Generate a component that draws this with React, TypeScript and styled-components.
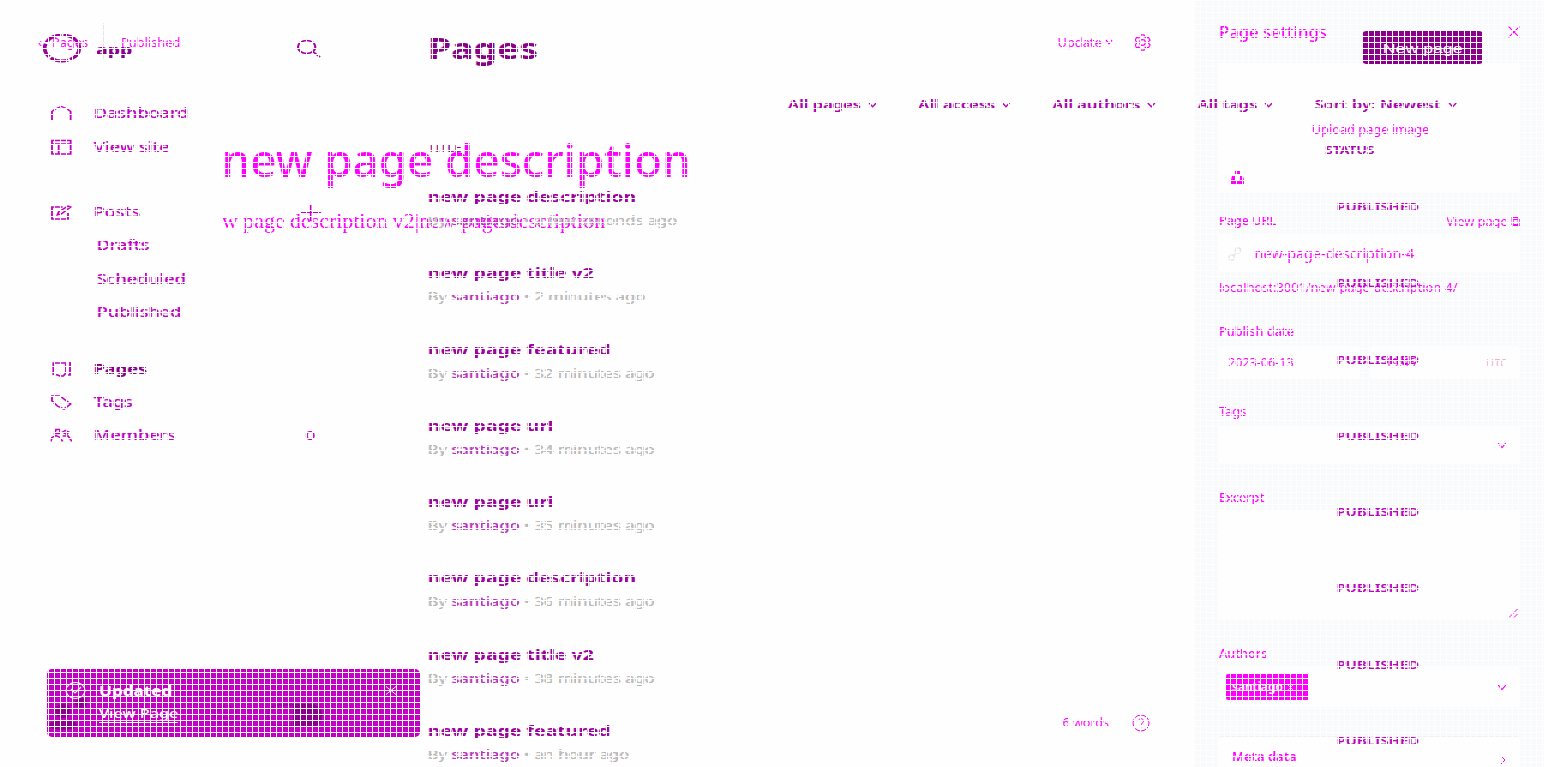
import React from "react";
import styled, { createGlobalStyle } from "styled-components";

const Global = createGlobalStyle`
  * { box-sizing: border-box; }
  body { margin: 0; background: #fefefe; overflow: hidden; font-family: "Noto Sans", "Open Sans", sans-serif; }
`;
const Stage = styled.div`
  position: relative; width: 1544px; height: 767px; overflow: hidden; background: #fefefe;
`;
const Layer = styled.div<{ $wide?: boolean }>`
  position: absolute; top: 0; left: 0; height: 767px; display: flex;
  width: ${p => (p.$wide ? 1158 : 1544)}px;
  transform: ${p => (p.$wide ? "scaleX(1.33333)" : "none")};
  text-shadow: ${p => (p.$wide ? "-0.7px 0 0 #d2d2d2" : "none")};
  transform-origin: 0 0;
`;
const Mesh = styled.div`
  position: absolute; inset: 0; pointer-events: none;
  background:
    repeating-linear-gradient(90deg, #fefefe 0 1px, transparent 1px 6px),
    repeating-linear-gradient(180deg, #fefefe 0 1px, transparent 1px 6px);
`;
const Txt = styled.span<{ $s: number; $c?: string; $w?: number; $ls?: number }>`
  font-size: ${p => p.$s}px; color: ${p => p.$c || "#f0f"}; font-weight: ${p => p.$w || 400};
  letter-spacing: ${p => p.$ls || 0}px; line-height: 20px; white-space: pre;
`;

/* editor */
const Editor = styled.main`
  width: 1195px; height: 767px; display: flex; flex-direction: column;
`;
const EditorBar = styled.header`
  height: 84px; padding: 0 44px 0 38px; display: flex; align-items: center;
`;
const Divider = styled.i`
  width: 1px; height: 36px; margin-top: -2px; background: #e6e6e6; margin-left: 15px; margin-right: 17px;
`;
const Spacer = styled.div<{ $w?: number }>`flex: ${p => (p.$w ? `0 0 ${p.$w}px` : "1")};`;
const EditorTitle = styled.h1`
  margin: 40px 0 0 221.500px; font-size: 45.700px; line-height: 70px; font-weight: 500; color: #f0f; white-space: pre;
`;
const Body = styled.p`
  margin: 12px 0 0 222px; font: 500 21.900px/30px "Liberation Serif", serif; color: #f0f; white-space: pre;
`;
const EditorFoot = styled.footer`
  margin-top: auto; height: 88px; padding-right: 45px; display: flex; justify-content: flex-end; align-items: center; gap: 23px;
`;
const Settings = styled.aside`
  width: 349px; height: 767px; background: #f9fafc; padding: 22px 24px 0 24px; display: flex; flex-direction: column;
`;
const Head = styled.div<{ $mt?: number }>`
  display: flex; justify-content: space-between; align-items: center; height: 20px; margin-top: ${p => p.$mt || 0}px; flex: none;
`;
const Box = styled.div<{ $h: number; $mt?: number; $w?: number; $p?: number }>`
  height: ${p => p.$h}px; margin-top: ${p => p.$mt || 0}px; width: ${p => (p.$w ? p.$w + "px" : "auto")};
  background: #fefefe; border-radius: 3px; display: flex; align-items: center; flex: none; padding: ${p => (p.$p ? `${p.$p}px` : "0 13px 0 9px")};
`;
const Upload = styled(Box)`
  flex-direction: column; padding: 56px 10px 8px 12px;
  svg { align-self: flex-start; margin-top: auto; }
`;
const DateRow = styled.div`display: flex; justify-content: space-between; margin-top: 5px;`;
const Chip = styled.span`
  background: #f0f; border-radius: 2px; height: 26px; width: 83px; padding-left: 6px; margin-left: -2px;
  display: flex; align-items: center; gap: 4px;
`;
const Card = styled(Box)`border-top: 1px solid #eef2f4; height: 60px; align-items: flex-start; padding-top: 9px;`;

/* list */
const Side = styled.nav`width: 321px; padding-left: 32px; padding-top: 0.6px; height: 767px;`;
const Brand = styled.div`height: 96px; padding-right: 80px; display: flex; align-items: center; gap: 10px;`;
const Group = styled.div<{ $mb: number }>`margin-bottom: ${p => p.$mb}px;`;
const NavRow = styled.div<{ $sub?: boolean; $end?: number }>`
  height: 33.4px; display: flex; align-items: center; padding-left: ${p => (p.$sub ? 40.5 : 6)}px; gap: 16.4px;
  padding-right: ${p => p.$end || 80}px;
`;
const Main = styled.section`flex: 1; padding-right: 46px; height: 767px; display: flex; flex-direction: column;`;
const Top = styled.div`height: 95px; flex: none; display: flex; align-items: center; justify-content: space-between;`;
const NewBtn = styled.button`
  width: 90px; height: 33px; border: 0; border-radius: 3px; background: #8b008b; padding: 2px 0 0;
`;
const Filters = styled.div`height: 20px; flex: none; display: flex; justify-content: flex-end; gap: 31px; padding-right: 19.500px;`;
const Filter = styled.div`display: flex; align-items: center; gap: 5px;`;
const Cols = styled.div`margin-top: 23px; height: 20px; flex: none; display: flex; align-items: center;`;
const StatusHead = styled.div`width: 118px;`;
const StatusCell = styled.div`width: 118.500px; padding-left: 9px; padding-top: 8px;`;
const Item = styled.article`
  height: 76.300px; display: flex; padding-top: 28px; flex: none;
`;
const ItemText = styled.div`flex: 1; display: flex; flex-direction: column; gap: 3px;`;
const Meta = styled.div`line-height: 20px;`;

const Toast = styled.div`
  position: absolute; left: 47px; top: 669px; width: 373px; height: 68px; border-radius: 5px; background: #c400c4; overflow: hidden;
`;
const Ghost = styled.svg`position: absolute; inset: 0;`;
const ToastBody = styled.div`position: relative; display: flex; padding: 12px 23px 0 18px; gap: 13px;`;
const ToastText = styled.div`flex: 1; display: flex; flex-direction: column; gap: 2px;`;
const Stretch = styled.div<{ $line?: boolean }>`
  transform: scaleX(1.25); transform-origin: 0 0; display: flex; align-self: flex-start; height: 20px;
  border-bottom: ${p => (p.$line ? "1px solid #fff" : "0")};
`;

const Chev = ({ c = "#b800b8", w = 8, h = 6, t = 1.3 }: { c?: string; w?: number; h?: number; t?: number }) => (
  <svg width={w} height={h} viewBox="0 0 8 6" preserveAspectRatio="none" fill="none" stroke={c} strokeWidth={t}><path d="M1 1l3 3.800L7 1" /></svg>
);
const Cross = ({ c, s }: { c: string; s: number }) => (
  <svg width={s} height={s} viewBox="0 0 10 10" stroke={c} strokeWidth="1"><path d="M.5.5l9 9M9.5.5l-9 9" /></svg>
);
const Gear = ({ s, c }: { s: number; c: string }) => (
  <svg width={s} height={s} viewBox="0 0 16 16" fill="none" stroke={c} strokeWidth="1.1">
    <path d="M6.500.8h3l.5 2 1.600.9 2-.5 1.500 2.600-1.400 1.400v1.700l1.400 1.400-1.500 2.600-2-.5-1.600.9-.5 1.900h-3l-.5-2-1.600-.8-2 .5L1 10.300l1.400-1.400V7.200L1 5.800l1.400-2.600 2 .5L6 2.800z" />
    <circle cx="8" cy="8" r="2.700" />
  </svg>
);

const icons: Record<string, React.ReactNode> = {
  Dashboard: <path d="M1 15.500V6.500L3.500 4 8 1.500 12.500 4 15 6.500v9" />,
  "View site": <path d="M1 1.500h14v13.500H1zM1 5h14M6 5v10" />,
  Posts: <path d="M9 3H1v12h12V9M5 11l1-3 7-6 2 1-7 7z" />,
  Pages: <path d="M2 14V2h9.500v10l-2 3H7l-3-1.500M14.500 1v13H13" />,
  Tags: <path d="M1 2h6l8 8-5 5-5-3-4-5z" />,
  Members: <path d="M0 14.500l1-4 3-2 3 2 2 4M4 2.500h3v4H3zM9 5l2-1.500L13.500 5 12 7.500zM9 9h4l3 5.500" />,
};
const Nav = ({ n, sub, bold, extra, end }: { n: string; sub?: boolean; bold?: boolean; extra?: React.ReactNode; end?: number }) => (
  <NavRow $sub={sub} $end={end}>
    {!sub && <svg width="16" height="16" viewBox="0 0 16 16" fill="none" stroke="#c400c4" strokeWidth="1.4">{icons[n]}</svg>}
    <Txt $s={13.7} $c={bold ? "#8b008b" : "#c400c4"} $w={bold ? 700 : 500} $ls={-0.1}>{n}</Txt>
    {extra && <><Spacer />{extra}</>}
  </NavRow>
);
const items = [
  ["new page description", "a few seconds ago"], ["new page title v2", "2 minutes ago"],
  ["new page featured", "32 minutes ago"], ["new page url", "34 minutes ago"],
  ["new page url", "35 minutes ago"], ["new page description", "36 minutes ago"],
  ["new page title v2", "38 minutes ago"], ["new page featured", "an hour ago"],
];

export default function App() {
  return (
    <Stage>
      <Global />
      <Layer>
        <Editor>
          <EditorBar>
            <Txt $s={12.8}>‹   Pages</Txt><Divider />
            <Txt $s={12.8}>Published</Txt><Spacer />
            <Txt $s={12.8}>Update </Txt><Chev c="#f0f" /><Spacer $w={21} /><Gear s={17} c="#f0f" />
          </EditorBar>
          <EditorTitle>new page description</EditorTitle>
          <Body>w page description v2|new page description</Body>
          <EditorFoot>
            <Txt $s={12.5}>6 words</Txt>
            <svg width="18" height="18" viewBox="0 0 18 18" fill="none" stroke="#f0f"><circle cx="9" cy="9" r="8" /><path d="M6.500 7c0-3 5-3 5 0 0 2-2.500 2-2.500 4M9 12.500v1" /></svg>
          </EditorFoot>
        </Editor>
        <Settings>
          <Head><Txt $s={16.7} $w={500}>Page settings</Txt><Spacer /><Cross c="#f0f" s={12} /></Head>
          <Upload $h={130} $mt={21}>
            <Txt $s={12.8}>Upload page image</Txt>
            <svg width="13" height="14" viewBox="0 0 13 14" fill="#f0f"><path d="M4 0h5v3H4zM1 5h3v4h5V5h3l1 4v4H0V9z" /></svg>
          </Upload>
          <Head $mt={18}><Txt $s={12.6} $w={500}>Page URL</Txt><Txt $s={12.8}>View page ⧉</Txt></Head>
          <Box $h={37} $mt={4}>
            <svg width="14" height="14" viewBox="0 0 14 14" fill="none" stroke="#e1e6ea" strokeWidth="1.500"><rect x="7.500" y="1" width="5" height="5" rx="2" /><rect x="1" y="8" width="5" height="5" rx="2" /><path d="M5 9l4-4" /></svg>
            <Spacer $w={12.5} /><Txt $s={14.4}>new-page-description-4</Txt>
          </Box>
          <Head $mt={5}><Txt $s={12.8}>localhost:3001/new-page-description-4/</Txt></Head>
          <Head $mt={24}><Txt $s={12.7} $w={500}>Publish date</Txt></Head>
          <DateRow>
            <Box $h={33} $w={141}><Txt $s={12.600}>2023-06-13</Txt></Box>
            <Box $h={33} $w={150}><Txt $s={12}>  19:45</Txt><Spacer /><Txt $s={11} $c="#f0b0c8">UTC</Txt></Box>
          </DateRow>
          <Head $mt={22}><Txt $s={12.8}>Tags</Txt></Head>
          <Box $h={38} $mt={5}><Spacer /><Chev c="#f0f" w={10} h={7} t={0.9} /></Box>
          <Head $mt={23}><Txt $s={12.7} $w={500}>Excerpt</Txt></Head>
          <Box $h={109} $mt={4} $p={2}><Spacer /><svg width="9" height="9" viewBox="0 0 9 9" stroke="#f0f" style={{ alignSelf: "flex-end" }}><path d="M0 8.500L8.500 0M5 8.500l3.500-3.500" /></svg></Box>
          <Head $mt={23}><Txt $s={12.7} $w={500}>Authors</Txt></Head>
          <Box $h={40} $mt={4}><Chip><Txt $s={12} $c="#fff" $w={600}>santiago</Txt><Cross c="#fff" s={7} /></Chip><Spacer /><Chev c="#f0f" w={10} h={7} t={0.9} /></Box>
          <Card $h={60} $mt={29} $p={9}><Spacer $w={4} /><Txt $s={13} $w={600}>Meta data</Txt><Spacer /><svg width="12" height="19" viewBox="0 0 12 19" fill="none" stroke="#f0f"><path d="M1 9l5 5-5 5" /></svg></Card>
        </Settings>
      </Layer>

      <Layer $wide>
        <Side>
          <Brand>
            <svg width="30" height="30" viewBox="0 0 30 30" fill="none" stroke="#a000a0"><circle cx="14.500" cy="14" r="13" strokeWidth="2.800" strokeDasharray="14 1.500" /></svg>
            <Txt $s={14.5} $c="#8b008b" $w={800}>app</Txt><Spacer />
            <svg width="19" height="19" viewBox="0 0 19 19" fill="none" stroke="#a800a8" strokeWidth="1.600"><circle cx="8" cy="8" r="6.500" /><path d="M13 13l5 5" /></svg>
          </Brand>
          <Group $mb={32}><Nav n="Dashboard" /><Nav n="View site" /></Group>
          <Group $mb={23}>
            <Nav n="Posts" extra={<svg width="16" height="17" viewBox="0 0 16 17" stroke="#c400c4" strokeWidth="1.200"><path d="M8 0v17M0 8.500h16" /></svg>} />
            <Nav n="Drafts" sub /><Nav n="Scheduled" sub /><Nav n="Published" sub />
          </Group>
          <Group $mb={0}>
            <Nav n="Pages" bold /><Nav n="Tags" /><Nav n="Members" end={84.5} extra={<Txt $s={13} $c="#c400c4">0</Txt>} />
          </Group>
        </Side>
        <Main>
          <Top>
            <Txt $s={28} $c="#8b008b" $w={700}>Pages</Txt>
            <NewBtn><Txt $s={13.300} $c="#fff" $w={500}>New page</Txt></NewBtn>
          </Top>
          <Filters>
            {["All pages", "All access", "All authors", "All tags", "Sort by: Newest"].map(f => (
              <Filter key={f}><Txt $s={12.4} $c="#b000b0" $w={600}>{f}</Txt><Chev w={7} /></Filter>
            ))}
          </Filters>
          <Cols><Txt $s={10} $c="#8b008b">TITLE</Txt><Spacer /><StatusHead><Txt $s={10.5} $c="#b000b0" $w={600}>STATUS</Txt></StatusHead></Cols>
          {items.map(([t, m], i) => (
            <Item key={i}>
              <ItemText>
                <Txt $s={14.6} $c="#a000a0" $w={700}>{t}</Txt>
                <Meta><Txt $s={12.4} $c="#b8b8b8">By </Txt><Txt $s={12.4} $c="#c030c0" $w={500}>santiago</Txt><Txt $s={12.4} $c="#b8b8b8"> • {m}</Txt></Meta>
              </ItemText>
              <StatusCell><Txt $s={11.2} $c="#c400c4" $w={600}>PUBLISHED</Txt></StatusCell>
            </Item>
          ))}
        </Main>
      </Layer>

      <Toast>
        <Ghost width="373" height="68" viewBox="0 0 373 68" fill="#8b008b">
          <ellipse cx="16" cy="42" rx="8" ry="7" /><ellipse cx="16" cy="56" rx="14" ry="5" /><ellipse cx="34" cy="34" rx="6" ry="5" />
          <ellipse cx="179" cy="46" rx="11" ry="9" fill="none" stroke="#a800a8" strokeWidth="2" strokeDasharray="4 3" /><ellipse cx="179" cy="46" rx="4" ry="3" fill="none" stroke="#a800a8" />
          <rect x="221" y="36" width="53" height="21" rx="10" fill="none" stroke="#a800a8" strokeWidth="2" /><path d="M246 35h18a10 10 0 0 1 0 23h-18z" />
        </Ghost>
        <ToastBody>
          <svg width="21" height="19" viewBox="0 0 21 19" fill="none" stroke="#fff" strokeWidth="1.200"><ellipse cx="10.500" cy="9.500" rx="9.500" ry="8" /><path d="M6 8l4 4 6-6" /></svg>
          <ToastText>
            <Stretch><Txt $s={13.7} $c="#fff" $w={700}>Updated</Txt></Stretch>
            <Stretch $line><Txt $s={13} $c="#fff" $w={500}>View Page</Txt></Stretch>
          </ToastText>
          <svg width="12" height="19" viewBox="0 0 12 19" stroke="#fff"><path d="M1 5.500l10 8M11 5.500l-10 8" /></svg>
        </ToastBody>
      </Toast>
      <Mesh />
    </Stage>
  );
}
